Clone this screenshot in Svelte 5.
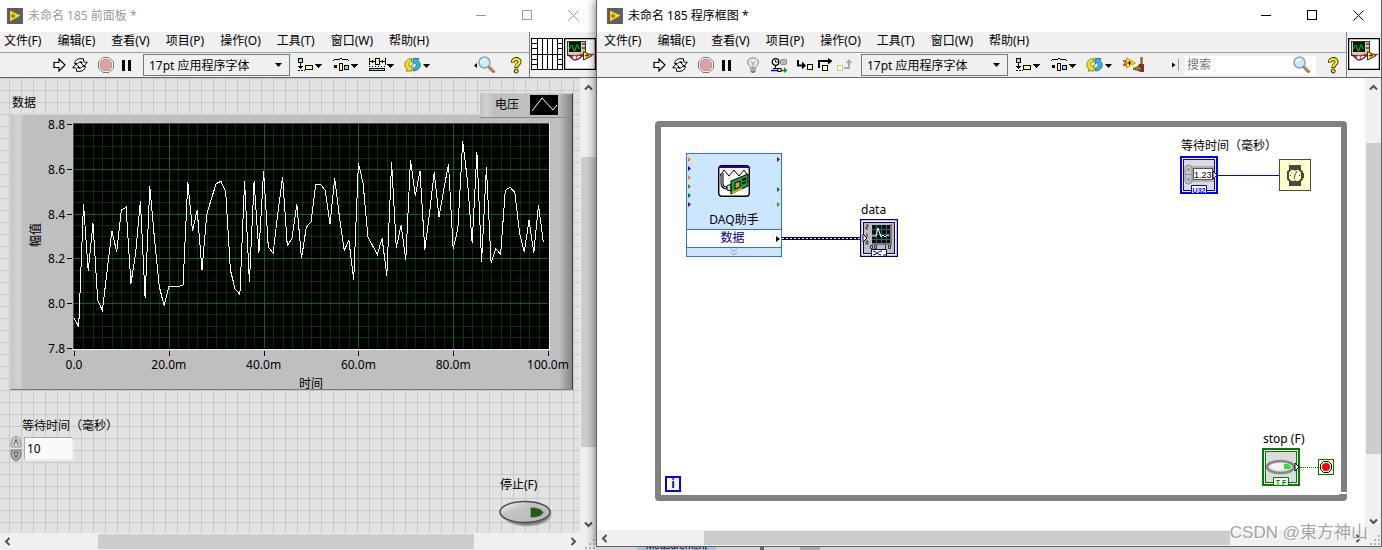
<script>
  const menus = ['文件(F)', '编辑(E)', '查看(V)', '项目(P)', '操作(O)', '工具(T)', '窗口(W)', '帮助(H)'];
  const fontName = '17pt 应用程序字体';

  // acquired samples, three counts per plot unit, 132 counts at full scale
  const samples = [
    714, 740, 372, 572, 430, 660, 692, 570, 453, 515, 390, 382, 611, 520, 363, 653, 319, 480, 620, 677,
    619, 619, 619, 616, 307, 452, 391, 570, 405, 355, 311, 304, 335, 570, 628, 643, 304, 605, 304, 518,
    273, 501, 520, 400, 291, 497, 475, 372, 535, 442, 425, 313, 313, 331, 433, 294, 410, 511, 481, 600,
    250, 310, 470, 497, 523, 475, 587, 246, 503, 436, 539, 240, 347, 273, 510, 400, 277, 410, 330, 252,
    507, 445, 183, 300, 490, 216, 545, 261, 548, 506, 523, 331, 322, 337, 460, 515, 421, 518, 375, 486
  ];
  const plotW = 474;
  const plotH = 224;
  const px = (ms) => 64 + (ms * plotW) / 100;
  const py = (step) => 10 + (step * plotH) / 20;
  const trace = samples.map((c, i) => `${px(i).toFixed(1)},${(10 + (c - 132) / 3).toFixed(1)}`).join(' ');
  const xMinor = Array.from({ length: 49 }, (_, i) => (i + 1) * 2);
  const yMinor = Array.from({ length: 19 }, (_, i) => i + 1);
  const xTicks = [[0, '0.0'], [20, '20.0m'], [40, '40.0m'], [60, '60.0m'], [80, '80.0m'], [100, '100.0m']];
  const yTicks = [[0, '8.8'], [4, '8.6'], [8, '8.4'], [12, '8.2'], [16, '8.0'], [20, '7.8']];

  let wait = $state('10');
</script>

{#snippet logo()}
  <svg class="logo" width="16" height="16" viewBox="0 0 16 16" aria-hidden="true">
    <rect width="16" height="16" fill="#5d5f66" />
    <path d="M3 2.500 L13.500 7.500 L3 13.500Z" fill="#fd0" />
    <path d="M6 5.500v5M3.500 8h5" stroke="#5d5f66" />
  </svg>
{/snippet}

{#snippet controls()}
  <div class="controls">
    <button aria-label="最小化"><svg width="11" height="11"><path d="M0 5.500h10" /></svg></button>
    <button aria-label="最大化"><svg width="11" height="11"><path d="M.5 .5h9v9h-9z" /></svg></button>
    <button aria-label="关闭"><svg width="11" height="11" class="smooth"><path d="M.5 .5l10 10M10.500 .5l-10 10" /></svg></button>
  </div>
{/snippet}

{#snippet menubar()}
  <nav class="menubar">
    {#each menus as m}<button>{m}</button>{/each}
  </nav>
{/snippet}

{#snippet runGroup()}
  <div class="group">
    <button aria-label="运行"><svg width="13" height="14" viewBox="0 0 13 14"><path d="M1 4.500h5V1l6 6-6 6V9.500H1z" fill="#fff" stroke="#000" stroke-width="1.200" /></svg></button>
    <button aria-label="连续运行">
      <svg width="16" height="14" viewBox="0 0 16 14">
        <path d="M2.500 5.500C3.500 2 5.500 .7 8 .7h3.500v2.500l1.500 1h2.300L12 8.200 8.500 4.500h2C9 3.200 7 3.700 5.500 5.500z" fill="#fff" stroke="#000" />
        <path d="M13.500 8.500c-1 3.500-3 4.800-5.500 4.800H4.500v-2.500L3 9.800H.7L4 5.800 7.500 9.500h-2c1.500 1.300 3.500 .8 5-1z" fill="#fff" stroke="#000" />
      </svg>
    </button>
  </div>
  <div class="group">
    <button aria-label="中止">
      <svg width="16" height="16" viewBox="0 0 16 16">
        <path d="M5 .5h6L15.500 5v6L11 15.500H5L.5 11V5z" fill="#f5f5f5" stroke="#777" />
        <path d="M5.500 2.500h5l3 3v5l-3 3h-5l-3-3v-5z" fill="#dca3a3" stroke="#c78e8e" />
      </svg>
    </button>
    <button aria-label="暂停"><svg width="10" height="11"><path d="M0 0h3v11H0zM6 0h3v11H6z" /></svg></button>
  </div>
{/snippet}

{#snippet tri()}<path d="M18 7h7l-3.500 4z" />{/snippet}

{#snippet fontPicker(id)}
  <div class="picker">
    <select {id} aria-label="字体"><option>{fontName}</option></select>
    <svg width="7" height="4" aria-hidden="true"><path d="M0 0h7L3.500 4z" /></svg>
  </div>
{/snippet}

{#snippet alignBtn()}
  <button aria-label="对齐对象">
    <svg width="25" height="16" viewBox="0 0 25 16" class="crisp">
      <path d="M1.500 1.500h4v4h-4z" fill="#7be6f0" stroke="#000" />
      <path d="M3.500 6v5M1 9.500h5M2 10.500h3M3 11.500h1M1 13.500h2M4 13.500h2M7 13.500h1" stroke="#000" fill="none" />
      <path d="M8.500 8.500h7v4h-7z" fill="#ffff9a" stroke="#000" />
      {@render tri()}
    </svg>
  </button>
{/snippet}

{#snippet distributeBtn()}
  <button aria-label="分布对象">
    <svg width="25" height="16" viewBox="0 0 25 16" class="crisp">
      <path d="M0 3.500h1M1 2.500h6M7 1.500h2M9 2.500h6M15 3.500h1" fill="none" stroke="#000" />
      <path d="M1 8h3v3H1z" />
      <path d="M6.500 6.500h3v7h-3z" fill="#ffff9a" stroke="#000" />
      <path d="M11.500 8.500h4v4h-4z" fill="#7be6f0" stroke="#000" />
      {@render tri()}
    </svg>
  </button>
{/snippet}

{#snippet reorderBtn()}
  <button aria-label="重新排序">
    <svg width="26" height="16" viewBox="0 0 26 16">
      <path d="M7.500 1.500C3 2 .8 4.500 .8 7.500c0 2 .9 3.600 2.400 4.500L2 14h6V8L6.500 9.800C4 8.500 4 5.500 7.500 4.800z" fill="#f2e020" stroke="#777000" stroke-width=".8" />
      <path d="M9.500 14c4.500-.5 6.700-3 6.700-6 0-2-.9-3.600-2.400-4.500L15 1.500H9v6L10.500 5.700c2.500 1.300 2.500 4.300-1 5z" fill="#31b7cb" stroke="#176b79" stroke-width=".8" />
      <path d="M19 7h7l-3.500 4z" />
    </svg>
  </button>
{/snippet}

{#snippet lens()}
  <svg width="20" height="18" viewBox="0 0 20 18" aria-hidden="true">
    <path d="M11.500 10.500l5 5" stroke="#b5622b" stroke-width="3" stroke-linecap="round" />
    <path d="M11.500 10l5 5" stroke="#f0b98a" stroke-width="1" />
    <circle cx="7.500" cy="6.500" r="5.500" fill="#c9ebfb" stroke="#86a6c4" stroke-width="1.500" />
    <path d="M4.500 6c.5-2 2-2.800 4-2.500" stroke="#fff" stroke-width="2" fill="none" />
  </svg>
{/snippet}

{#snippet helpBtn()}
  <button aria-label="即时帮助">
    <svg width="13" height="17" viewBox="0 0 13 17">
      <path d="M3 5.500C2.500 1 10 1 9.500 5 9.300 7.500 6.200 7.200 6.200 11" fill="none" stroke="#222" stroke-width="4" />
      <circle cx="6.200" cy="14" r="2" fill="#ffe900" stroke="#222" />
      <path d="M3 4.800C2.500 1.300 10 1 9.500 5 9.300 7.500 6.200 7.200 6.200 10.300" fill="none" stroke="#ffe900" stroke-width="2.400" />
    </svg>
  </button>
{/snippet}

{#snippet viIcon()}
  <svg width="32" height="32" viewBox="0 0 32 32" role="img" aria-label="VI图标">
    <rect x=".5" y=".5" width="31" height="31" fill="#fff" stroke="#000" stroke-width="1.500" />
    <g class="crisp">
      <path d="M3.500 3.500h18v14h-18z" fill="#d6cda5" stroke="#333" />
      <path d="M5 4h12v10H5z" fill="#001800" />
      <path d="M18 5h3v2h-3zM18 9h3v2h-3z" fill="#6d664c" />
    </g>
    <path d="M5.500 11c1.500-5 2.500-5 3.500-1s2 4 3-.5 2-3 3 1.500" fill="none" stroke="#14d53c" />
    <path d="M4 17c2 0 3 5 7 5s5-3 9-5" fill="none" stroke="#1d20bb" stroke-width="1.300" />
    <path d="M6 19c4 0 8-2 13-2.500h11" fill="none" stroke="#d61a1a" stroke-width="1.300" />
    <circle cx="10.500" cy="19.500" r="2.200" fill="#fff" stroke="#d61a1a" />
    <path d="M19.500 13.500v8.500l8.500-4.300z" fill="#ffec12" stroke="#333" />
    <path d="M21 17.500h4M23 15.500v4" stroke="#333" />
  </svg>
{/snippet}

{#snippet pane()}
  <svg width="32" height="32" viewBox="0 0 32 32" class="crisp" role="img" aria-label="连线板">
    <rect x=".5" y=".5" width="31" height="31" fill="#fff" stroke="#000" />
    <path d="M6.500 0v32M11.500 0v32M16.500 0v32M21.500 0v32M26.500 0v32M6 16.500h20M0 5.500h6M0 10.500h6M0 16.500h6M0 21.500h6M0 26.500h6M26 5.500h6M26 10.500h6M26 16.500h6M26 21.500h6M26 26.500h6" stroke="#000" fill="none" />
  </svg>
{/snippet}

{#snippet chev(d)}<svg width="9" height="9" viewBox="0 0 9 9" aria-hidden="true"><path {d} fill="none" stroke="#505050" stroke-width="2" /></svg>{/snippet}

{#snippet vbar(a, b, c)}
  <div class="vbar">
    <button aria-label="向上滚动">{@render chev('M1 6.500L4.500 3 8 6.500')}</button>
    <div class="track"><i style="flex:{a}"></i><b style="flex:{b}"></b><i style="flex:{c}"></i></div>
    <button aria-label="向下滚动">{@render chev('M1 2.500L4.500 6 8 2.500')}</button>
  </div>
{/snippet}

{#snippet hbar(a, b, c)}
  <div class="hbar">
    <button aria-label="向左滚动">{@render chev('M6.500 1L3 4.500 6.500 8')}</button>
    <div class="track"><i style="flex:{a}"></i><b style="flex:{b}"></b><i style="flex:{c}"></i></div>
    <button aria-label="向右滚动">{@render chev('M2.500 1L6 4.500 2.500 8')}</button>
  </div>
{/snippet}

{#snippet grip()}
  <div class="grip"><svg width="10" height="10" class="crisp" aria-hidden="true"><path d="M8 0h2v2H8zM4 4h2v2H4zM8 4h2v2H8zM0 8h2v2H0zM4 8h2v2H4zM8 8h2v2H8z" fill="#b8b8b8" /></svg></div>
{/snippet}

<main>
  <section class="window front">
    <header class="title">{@render logo()}<span>未命名 185 前面板 *</span>{@render controls()}</header>
    <div class="head">
      <div class="bars">
        {@render menubar()}
        <div class="toolbar">
          {@render runGroup()}
          {@render fontPicker('front-font')}
          <div class="arrange">
            {@render alignBtn()}
            {@render distributeBtn()}
            <button aria-label="调整对象大小">
              <svg width="25" height="16" viewBox="0 0 25 16" class="crisp">
                <path d="M6.500 1.500h4v6h-4z" fill="#ffff9a" stroke="#000" />
                <path d="M.5 1v7M16.500 1v7M1 4.500h5M11 4.500h5M3.500 3v3M2.500 4v1M13.500 3v3M14.500 4v1" stroke="#000" />
                <path d="M0 9.500h1M3 9.500h1M6 9.500h1M9 9.500h1M12 9.500h1M15 9.500h1" stroke="#000" />
                <path d="M.5 11.500h15v2H.5z" fill="#7be6f0" stroke="#000" />
                {@render tri()}
              </svg>
            </button>
            {@render reorderBtn()}
          </div>
          <div class="tail">
            <button class="find" aria-label="搜索"><svg width="3" height="5"><path d="M3 0v5L0 2.500z" /></svg>{@render lens()}</button>
            {@render helpBtn()}
          </div>
        </div>
      </div>
      <div class="icons">{@render pane()}{@render viIcon()}</div>
    </div>
    <div class="body">
      <div class="canvas panel">
        <span class="tag chart-tag">数据</span>
        <div class="chart">
          <svg width="563" height="280" viewBox="0 0 563 280" role="img" aria-label="数据">
            <rect x="63" y="9" width="476" height="226" fill="#000" />
            <g class="crisp" fill="none">
              {#each xMinor as m}<path d="M{Math.round(px(m)) + 0.5} 10v224" stroke="#003600" />{/each}
              {#each yMinor as s}<path d="M64 {Math.round(py(s)) + 0.5}h474" stroke={s % 4 ? '#003600' : '#006e00'} />{/each}
              {#each [20, 40, 60, 80] as m}<path d="M{Math.round(px(m)) + 0.5} 10v224" stroke="#006e00" />{/each}
              <path d="M63.500 235V9.500h476" stroke="#4b4f4b" />
              <path d="M63 235.500h476.500V9" stroke="#f2f2f2" />
              {#each xTicks as [m]}<path d="M{Math.round(px(m)) + 0.5} 237v5" stroke="#000" />{/each}
              {#each yTicks as [s]}<path d="M57 {Math.round(py(s)) + 0.5}h5" stroke="#000" />{/each}
            </g>
            <polyline points={trace} fill="none" stroke="#fff" class="crisp" />
            {#each xTicks as [m, t]}<text x={px(m)} y="255" text-anchor="middle">{t}</text>{/each}
            {#each yTicks as [s, t]}<text x="55" y={py(s) + 5} text-anchor="end">{t}</text>{/each}
            <text x="301" y="274" text-anchor="middle">时间</text>
            <text transform="translate(30 121) rotate(-90)" text-anchor="middle">幅值</text>
          </svg>
        </div>
        <div class="legend">
          <span>电压</span>
          <svg width="28" height="20" viewBox="0 0 28 20" aria-hidden="true"><rect width="28" height="20" /><path d="M2 16L12 3l11 12 4-5" fill="none" stroke="#fff" /></svg>
        </div>
        <div class="numeric">
          <label for="wait">等待时间（毫秒）</label>
          <div class="field">
            <div class="spin">
              <button aria-label="增加"><svg width="12" height="13" viewBox="0 0 12 13"><path d="M1 12V7q1-5 5-6 4 1 5 6v5z" fill="#c6c6c6" stroke="#999" /><path d="M4 9.500l2-5 2 5" fill="#ddd" stroke="#555" /></svg></button>
              <button aria-label="减少"><svg width="12" height="13" viewBox="0 0 12 13"><path d="M1 1v5q1 5 5 6 4-1 5-6V1z" fill="#aaa" stroke="#777" /><path d="M4 3.500l2 5 2-5z" fill="#ddd" stroke="#555" /></svg></button>
            </div>
            <input id="wait" bind:value={wait} />
          </div>
        </div>
        <div class="stopper">
          <label for="halt">停止(F)</label>
          <button id="halt" aria-label="停止(F)">
            <svg width="54" height="28" viewBox="0 0 54 28">
              <defs>
                <linearGradient id="oval" x1="0" y1="0" x2="1" y2="1"><stop offset="0" stop-color="#fff" /><stop offset=".35" stop-color="#c4c4c4" /><stop offset="1" stop-color="#b5b5b5" /></linearGradient>
                <radialGradient id="shade"><stop offset=".8" stop-color="#666" /><stop offset="1" stop-color="#666" stop-opacity="0" /></radialGradient>
              </defs>
              <ellipse cx="28" cy="14.500" rx="26" ry="12.500" fill="url(#shade)" opacity=".8" />
              <ellipse cx="26" cy="12" rx="25" ry="10.500" fill="url(#oval)" stroke="#4b4b4b" stroke-width="1.500" />
              <path d="M31.500 7.500h4q7 1 9 5-2 4-9 5h-4z" fill="#24591a" stroke="#8fa888" stroke-width=".6" />
            </svg>
          </button>
        </div>
      </div>
      {@render vbar(61, 290, 68)}
      {@render hbar(84, 374, 92)}
      {@render grip()}
    </div>
  </section>

  <div class="right">
    <section class="window diagram">
      <header class="title">{@render logo()}<span>未命名 185 程序框图 *</span>{@render controls()}</header>
      <div class="head">
        <div class="bars">
          {@render menubar()}
          <div class="toolbar">
            {@render runGroup()}
            <button aria-label="高亮显示执行过程">
              <svg width="14" height="17" viewBox="0 0 14 17">
                <path d="M4.500 11C4.500 9 1.500 8 1.500 5.500 1.500 2.500 4 .8 7 .8s5.500 1.700 5.500 4.700C12.500 8 9.500 9 9.500 11z" fill="#e6e6e6" stroke="#888" />
                <path d="M5 4.500l2 2 2-2M7 6v5" fill="none" stroke="#999" />
                <path d="M4.500 11.500h5v3L8 16H6l-1.500-1.500z" fill="#777" /><path d="M5 13h4" stroke="#eee" />
              </svg>
            </button>
            <button aria-label="保存连线值">
              <svg width="17" height="15" viewBox="0 0 17 15">
                <circle cx="4.500" cy="4" r="3.300" fill="#fff" stroke="#000" stroke-width="1.300" /><path d="M4.500 2v2h2M4.500 7.500v3M2 10.500h5" stroke="#000" fill="none" />
                <rect x="9.500" y="1.500" width="6" height="5" rx="1" fill="#bbb" stroke="#888" />
                <path d="M0 12.500h7" stroke="#00f" stroke-width="1.500" /><path d="M10 12.500h4" stroke="#080" stroke-width="1.500" />
                <rect x="7" y="10.500" width="3" height="3" fill="#fff" stroke="#000" /><path d="M13 9l3.500 3.500L13 15z" fill="#00a020" />
              </svg>
            </button>
            <div class="group steps">
              <button aria-label="单步步入"><svg width="16" height="14" viewBox="0 0 16 14"><path d="M1 2v5.500h5" fill="none" stroke="#000" stroke-width="2" /><path d="M5 3.500l4 4-4 4z" /><rect x="10.500" y="6.500" width="5" height="5" fill="#ffff9a" stroke="#000" /></svg></button>
              <button aria-label="单步步过"><svg width="15" height="14" viewBox="0 0 15 14"><path d="M1 10V3h10" fill="none" stroke="#000" stroke-width="2" /><path d="M10 0l4.500 3L10 6.500z" /><rect x="4.500" y="7.500" width="5" height="5" fill="#ffff9a" stroke="#000" /></svg></button>
              <button aria-label="单步步出"><svg width="16" height="14" viewBox="0 0 16 14"><path d="M7 10h5V4" fill="none" stroke="#aaa" stroke-width="2" /><path d="M8.500 5L12 1l3.500 4z" fill="#aaa" /><rect x=".5" y="7.500" width="5" height="5" fill="#ffffc0" stroke="#c5c5a8" /></svg></button>
            </div>
            {@render fontPicker('diagram-font')}
            <div class="arrange">
              {@render alignBtn()}
              {@render distributeBtn()}
              {@render reorderBtn()}
              <button aria-label="整理程序框图">
                <svg width="24" height="16" viewBox="0 0 24 16">
                  <path d="M0 4h5M0 8h4" stroke="#e01818" stroke-width="1.500" /><path d="M1 7c2 0 2-4 4-4" stroke="#22b" fill="none" />
                  <path d="M3.500 1v10l9-5z" fill="#ffe60f" stroke="#c79a00" /><path d="M4.500 6h4M6.500 4v4" stroke="#000" />
                  <path d="M18.500 0v7" stroke="#9a6a2d" stroke-width="2.500" />
                  <path d="M10 11l5-2 1-2h5v8h-3l-8-2.500z" fill="#6b421b" /><path d="M11 11.500l5-1.500M13 13l5-2" stroke="#caa05a" />
                </svg>
              </button>
            </div>
            <div class="tail">
              <svg class="handle" width="8" height="12" aria-hidden="true"><path d="M0 3.500v5l3.500-2.500z" /><path d="M6.500 0v12" stroke="#999" /></svg>
              <div class="search"><input aria-label="搜索" placeholder="搜索" />{@render lens()}</div>
              {@render helpBtn()}
            </div>
          </div>
        </div>
        <div class="icons">{@render viIcon()}</div>
      </div>
      <div class="body">
        <div class="canvas">
          <div class="loop">
            <div class="daq">
              <svg class="ports" width="94" height="74" viewBox="0 0 94 74" aria-hidden="true">
                <path d="M1 3v5l3-2.500z M1 21v5l3-2.500z" fill="#ff7f00" /><path d="M1 12v5l3-2.500z" fill="#00f" />
                <path d="M1 30v5l3-2.500zM90 48v5l3-2.500z" fill="#808000" /><path d="M1 39v5l3-2.500zM90 33v5l3-2.500z" fill="#008000" />
                <path d="M1 48v5l3-2.500zM90 3v5l3-2.500z" fill="#800080" />
              </svg>
              <div class="express">
                <svg width="32" height="32" viewBox="0 0 32 32" aria-hidden="true">
                  <rect x=".7" y=".7" width="30.600" height="30.600" rx="3" fill="#fff" stroke="#000" stroke-width="1.400" />
                  <path d="M1 2h30" stroke="#30009c" stroke-width="2" />
                  <path d="M2 11l4-6 5 6 5-6 5 6 5-6 4 6" fill="none" stroke="#000" />
                  <path d="M4 8v10q0 5 5 5h3" fill="none" stroke="#000" stroke-width="3" /><path d="M4 8v10q0 5 5 5h3" fill="none" stroke="#ddd" />
                  <path d="M9 21l4-2v7l-4-1z" fill="#ddd" stroke="#000" />
                  <path d="M13 16l17-7v12l-17 8z" fill="#1aa336" stroke="#000" />
                  <path d="M17 18l5-2v6l-5 2z" fill="#d9a520" stroke="#000" /><path d="M24 15l4-1.500M24 18.500l4-1.500" stroke="#000" stroke-width="2" />
                  <path d="M14 28l10-4.500" stroke="#d9a520" stroke-width="2" />
                </svg>
                <span>DAQ助手</span>
              </div>
              <div class="output">数据<svg width="4" height="6" aria-hidden="true"><path d="M0 0v6l4-3z" /></svg></div>
              <div class="more"><svg width="8" height="8" viewBox="0 0 8 8" aria-hidden="true"><path d="M.5 .5L4 3.500 7.500 .5M.5 4L4 7l3.500-3" fill="none" stroke="#8fa2b8" /></svg></div>
            </div>
            <div class="wire dynamic"></div>
            <div class="node graph">
              <span>data</span>
              <svg width="38" height="38" viewBox="0 0 38 38" aria-hidden="true">
                <rect x=".5" y=".5" width="37" height="37" fill="#fff" stroke="#00007f" stroke-width="1.500" />
                <rect x="3.500" y="3.500" width="31" height="31" fill="#bdbdbd" stroke="#00007f" />
                <rect x="12" y="6" width="18" height="18" fill="#101010" /><path d="M31 5v20H12" stroke="#777" fill="none" stroke-width="2" />
                <path d="M16.500 6v18M21.500 6v18M26.500 6v18M12 10.500h18M12 15.500h18M12 20.500h18" stroke="#1c6c6c" />
                <path d="M12 17h4l2-8 3 9 2-2 2 2 2-2 2 1" fill="none" stroke="#fff" />
                <path d="M6 6h2v2H6v2h2M7 14v4M6 22h2v3H6zM10.500 26.500h2v3h-2zM14.500 26.500h2v3h-2zM25.500 26v4M28.500 26.500h2v3h-2z" fill="none" stroke="#333" />
                <path d="M3 15v8l4-4z" fill="#fff" stroke="#000" />
                <path d="M11.500 30.500h15v7h-15z" fill="#fff" stroke="#00007f" /><path d="M13 32c3 0 4 4 8 4M13 36c3 0 5-4 9-4M23 36h3" fill="none" stroke="#00007f" />
              </svg>
            </div>
            <div class="node delay">
              <span>等待时间（毫秒）</span>
              <svg width="38" height="38" viewBox="0 0 38 38" aria-hidden="true">
                <rect x="1" y="1" width="36" height="36" fill="#fff" stroke="#00f" stroke-width="2" />
                <rect x="3.500" y="3.500" width="31" height="31" fill="#dcdcdc" stroke="#00f" />
                <rect x="11" y="10" width="23" height="16" fill="#b0b0b0" /><rect x="13.500" y="12.500" width="19" height="11" fill="#fff" stroke="#555" />
                <rect x="5" y="9" width="7" height="19" rx="3.500" fill="#c6c6c6" stroke="#888" /><path d="M5 18.500h7M7 14l1.500-2 1.500 2zM7 23l1.500 2 1.500-2z" stroke="#888" fill="none" />
                <path d="M33 15v8l4-4z" fill="#fff" stroke="#000" />
                <text x="14" y="22" class="num">1.23</text>
                <path d="M11.500 29.500h15v8h-15z" fill="#fff" stroke="#00f" /><text x="19" y="36.500" text-anchor="middle" class="mini" fill="#00f">U32</text>
              </svg>
            </div>
            <div class="wire int"></div>
            <svg class="timer" width="32" height="32" viewBox="0 0 32 32" role="img" aria-label="等待">
              <rect x=".5" y=".5" width="31" height="31" fill="#ffffcc" stroke="#4a4a3a" />
              <path d="M10 6h12v5H10zM10 22h12v5H10z" fill="#4a4a3a" /><path d="M12 10h8l3 3v7l-3 3h-8l-3-3v-7z" fill="#ffffcc" stroke="#4a4a3a" stroke-width="2" />
              <path d="M15 20l1-4 2-4M16 11v1M16 21v1M11 16.500h1M20 16.500h1M24.500 14v5" fill="none" stroke="#4a4a3a" />
            </svg>
            <div class="node halt">
              <span>stop (F)</span>
              <svg width="38" height="38" viewBox="0 0 38 38" aria-hidden="true">
                <rect x="1" y="1" width="36" height="36" fill="#fff" stroke="#007d00" stroke-width="2" />
                <rect x="3.500" y="3.500" width="31" height="31" fill="#dcdcdc" stroke="#007d00" />
                <ellipse cx="18.500" cy="19" rx="13.500" ry="6" fill="#ddd" stroke="#888" stroke-width="2.500" /><ellipse cx="18" cy="18.500" rx="10" ry="3.500" fill="#f3f3f3" />
                <path d="M22 16h4q3 1 3 3t-3 2h-4z" fill="#2ce23a" />
                <path d="M33 15v8l4-4z" fill="#fff" stroke="#000" />
                <path d="M11.500 29.500h15v8h-15z" fill="#fff" stroke="#007d00" /><text x="19" y="36.500" text-anchor="middle" class="mini" fill="#007d00">T F</text>
              </svg>
            </div>
            <div class="wire bool"></div>
            <svg class="cond" width="16" height="16" viewBox="0 0 16 16" role="img" aria-label="循环条件">
              <rect x=".5" y=".5" width="15" height="15" fill="#ffffcc" stroke="#007d00" /><path d="M5.500 2.500h5l3 3v5l-3 3h-5l-3-3v-5z" fill="#fff" stroke="#000" /><circle cx="8" cy="8" r="4" fill="#f00" />
            </svg>
            <div class="iter">i</div>
            <svg class="fold" width="8" height="10" viewBox="0 0 8 10" aria-hidden="true"><path d="M2 0h6v2H2zM6 9h2v1H6z" fill="#fff" /><path d="M0 2h4v2H0z" fill="#808080" /></svg>
          </div>
        </div>
        {@render vbar(47, 312, 58)}
        {@render hbar(93, 524, 121)}
        {@render grip()}
      </div>
    </section>
    <div class="behind"><span>Measurement</span><i></i><b></b></div>
    <p class="mark">CSDN @東方神山</p>
  </div>
</main>

<style>
  :global(body) { margin: 0; background: #e4e4e4; }
  main {
    display: grid;
    grid-template-columns: minmax(0, 596fr) minmax(0, 786fr);
    min-height: 100vh;
    font: 12px/16px "Noto Sans", "Noto Sans CJK SC", sans-serif;
    color: #000;
    overflow: hidden;
  }
  svg { display: block; flex: none; }
  .crisp { shape-rendering: crispEdges; }
  button, input, select { font: inherit; color: inherit; border: 0; padding: 0; margin: 0; background: none; border-radius: 0; }
  .window { display: flex; flex-direction: column; min-width: 0; background: #f0f0f0; }
  .right { position: relative; z-index: 1; display: flex; flex-direction: column; min-width: 0; }
  .diagram { flex: 1; border: solid #606060; border-width: 0 1px 1px; box-shadow: 0 0 10px rgba(0, 0, 0, 0.6); }
  .title { display: flex; align-items: center; height: 31px; padding-bottom: 1px; background: #fff; padding-left: 7px; gap: 5px; white-space: nowrap; }
  .diagram .title { padding-left: 10px; }
  .front .title { color: #999; }
  .controls { display: flex; margin-left: auto; }
  .controls button { display: grid; place-items: center; width: 46px; height: 30px; }
  .controls path { fill: none; stroke: currentColor; shape-rendering: crispEdges; }
  .controls .smooth path { shape-rendering: auto; }
  .head { display: flex; border-bottom: 1px solid #646464; }
  .bars { flex: 1; min-width: 0; }
  .menubar { display: flex; align-items: start; gap: 16px; height: 19px; padding: 1px 0 0 4px; border-bottom: 1px solid #a0a0a0; white-space: nowrap; }
  .diagram .menubar { padding-left: 7px; }
  .toolbar { display: flex; align-items: center; gap: 6px; height: 24px; padding-left: 49px; }
  .diagram .toolbar { padding-left: 52px; }
  .group { display: flex; gap: 1px; }
  .steps { gap: 0; }
  .toolbar button { display: flex; justify-content: center; align-items: center; width: 20px; height: 20px; flex: none; }
  .arrange { display: flex; gap: 10px; }
  .toolbar .arrange button { width: 26px; }
  .picker { display: grid; align-items: center; width: 147px; flex: none; }
  .picker > * { grid-area: 1 / 1; }
  .picker select { appearance: none; width: 100%; height: 22px; padding: 1px 0 0 5px; border: 1px solid #767676; background: #f0f0f0; }
  .picker svg { justify-self: end; margin-right: 8px; pointer-events: none; }
  .tail { display: flex; align-items: center; gap: 9px; margin-left: auto; padding-right: 3px; }
  .toolbar .find { width: 24px; }
  .search { display: flex; align-items: center; background: #fff; width: 131px; height: 19px; padding-right: 4px; box-sizing: border-box; }
  .diagram .tail { gap: 5px; padding-right: 1px; }
  .diagram .tail > button { width: 24px; }
  .search input { flex: 1; min-width: 0; padding-left: 2px; outline: none; }
  .search input::placeholder { color: #777; opacity: 1; }
  .icons { display: flex; gap: 1px; padding: 6px 0 0 1px; border-left: 1px solid #808080; }
  .diagram .icons { padding-right: 1px; }

  .body { flex: 1; display: grid; grid-template: minmax(0, 1fr) 17px / minmax(0, 1fr) 16px; }
  .diagram .body { grid-template-rows: minmax(0, 1fr) 16px; }
  .canvas { position: relative; overflow: hidden; background: #fff; min-height: 455px; }
  .diagram .canvas { min-height: 452px; }
  .panel { background: linear-gradient(#c8c8c8 1px, transparent 1px) 0 0 / 12px 12px, linear-gradient(90deg, #c8c8c8 1px, transparent 1px) 9px 0 / 12px 12px, #e2e2e2; }
  .vbar, .hbar { display: flex; background: #f0f0f0; }
  .vbar { flex-direction: column; }
  .vbar button, .hbar button { display: grid; place-items: center; width: 16px; height: 18px; flex: none; }
  .hbar button { width: 14px; height: 16px; }
  .track { flex: 1; display: flex; }
  .vbar .track { flex-direction: column; }
  .track b { background: #cdcdcd; margin-left: 1px; }
  .hbar .track b { margin: 1px 0; }
  .grip { display: flex; align-items: end; justify-content: end; padding: 1px; }

  .tag { position: absolute; white-space: nowrap; }
  .chart-tag { left: 12px; top: 17px; }
  .chart {
    position: absolute; left: 10px; top: 36px; width: 561px; height: 274px; border: 1px solid #d2d2d2; border-right-color: #444; border-bottom: 1px solid #777;
    background: linear-gradient(90deg, #c6c6c6, #d4d4d4 8px, #bfbfbf 13px, #bfbfbf 548px, #858585);
  }
  .chart svg { margin: -1px; }
  .legend {
    position: absolute; left: 480px; top: 15px; width: 93px; height: 25px; box-sizing: border-box;
    display: flex; align-items: center; justify-content: end; gap: 11px; padding: 0 14px 1px 0;
    border-bottom: 1px solid #888; border-top: 1px solid #ccc; border-right: 1px solid #444;
    background: linear-gradient(90deg, #c0c0c0, #d0d0d0 6px, #bfbfbf 14px, #bfbfbf 78px, #858585);
  }
  .numeric { position: absolute; left: 10px; top: 340px; }
  .numeric label { display: block; padding-left: 12px; white-space: nowrap; }
  .field { display: flex; align-items: center; gap: 2px; }
  .spin button { display: block; height: 14px; }
  .field input { width: 48px; height: 22px; box-sizing: border-box; background: #fafafa; border: solid #aaa; border-width: 1px 0 0 1px; padding-left: 2px; box-shadow: 2px 2px 0 #ececec; }
  .stopper { position: absolute; left: 499px; top: 399px; display: grid; gap: 7px; }
  .stopper label { padding-left: 1px; }
  .stopper button { display: block; }

  .loop { position: absolute; inset: 43px 18px 29px 58px; border: 6px solid #808080; border-radius: 4px; }
  .daq { position: absolute; left: 25px; top: 26px; width: 94px; border: 1px solid #3070f0; background: #cce6ff; text-align: center; }
  .ports { position: absolute; }
  .express { display: flex; flex-direction: column; align-items: center; gap: 15px; height: 64px; padding-top: 11px; }
  .output { position: relative; background: #fff; border: solid #3070f0; border-width: 1px 0; height: 17px; padding-right: 3px; color: #00007f; }
  .output svg { position: absolute; right: 1px; top: 6px; }
  .more { display: flex; justify-content: center; height: 8px; }
  .wire { position: absolute; }
  .dynamic { left: 121px; top: 110px; width: 78px; height: 3px; background: repeating-linear-gradient(90deg, #fff 0 2px, #00007f 2px 4px) 0 1px / 100% 1px no-repeat #00007f; }
  .node { position: absolute; display: flex; flex-direction: column; width: 38px; white-space: nowrap; }
  .node span { padding-left: 1px; }
  .graph { left: 199px; top: 75px; gap: 1px; }
  .delay { right: 123px; top: 11px; gap: 2px; }
  .halt { right: 41px; bottom: 9px; gap: 1px; }
  .int { right: 62px; top: 48px; width: 61px; height: 1px; background: #00f; }
  .bool { right: 23px; bottom: 27px; width: 18px; border-top: 1px dotted #007d00; }
  .timer { position: absolute; right: 30px; top: 32px; }
  .cond { position: absolute; right: 7px; bottom: 20px; }
  .iter { position: absolute; left: 4px; bottom: 3px; width: 12px; height: 12px; border: 2px solid #00f; background: #ffffcc; color: #00f; font-weight: 700; line-height: 12px; text-align: center; }
  .fold { position: absolute; right: -6px; bottom: -7px; }
  .num { font: 9px "Liberation Sans", sans-serif; }
  .mini { font: 700 7px "Liberation Sans", sans-serif; }

  .behind { position: relative; z-index: 1; height: 3px; overflow: hidden; padding-left: 41px; background: #d4d4d4; display: flex; align-items: end; font: 10px/9px "Liberation Sans", sans-serif; }
  .behind span { padding: 0 9px; background: #a9c0de; }
  .behind i { width: 4px; height: 3px; margin-left: 44px; background: #666; }
  .behind b { width: 20px; height: 3px; margin-left: 36px; background: #aaa; }
  .mark { position: absolute; right: 14px; bottom: 5px; margin: 0; z-index: 2; font: 17px/24px "Liberation Sans", "Noto Sans CJK SC", sans-serif; color: #a4a4a4; text-shadow: 1px 1px 0 #fff; white-space: nowrap; pointer-events: none; }
</style>
